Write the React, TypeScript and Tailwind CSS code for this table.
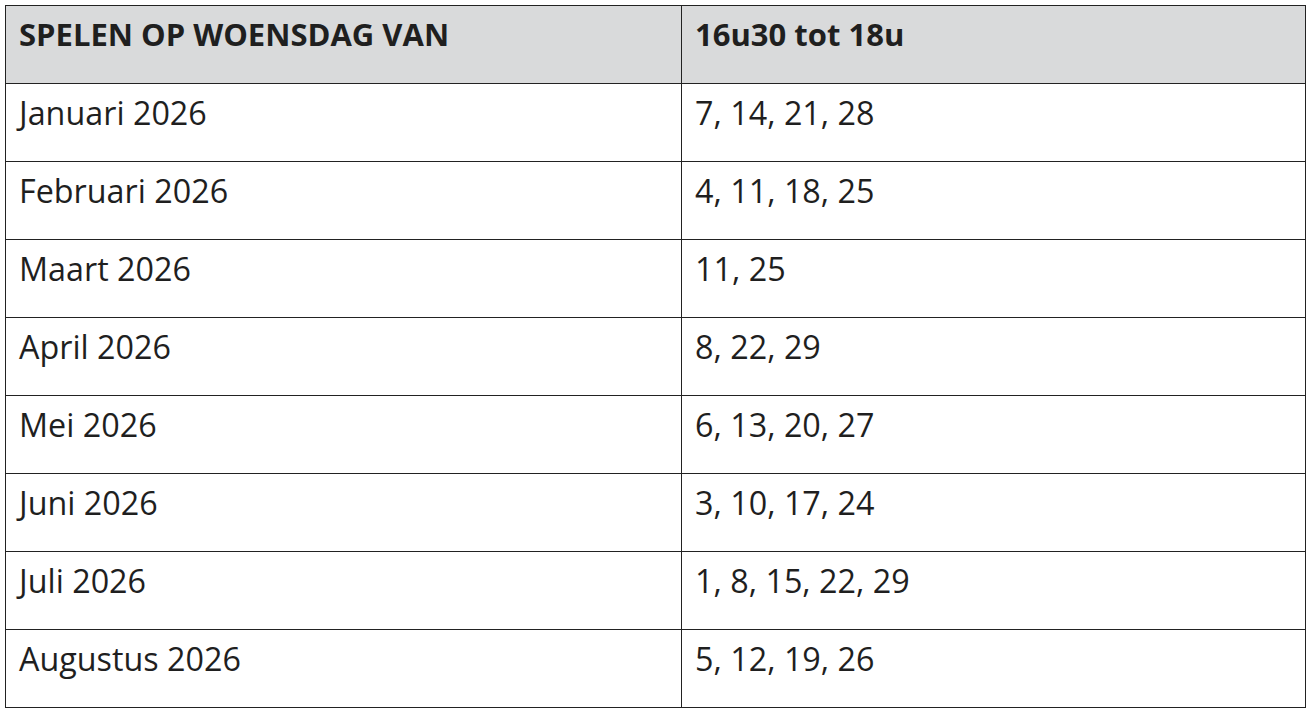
import React from "react";

const rows: [string, string][] = [
  ["Januari 2026", "7, 14, 21, 28"],
  ["Februari 2026", "4, 11, 18, 25"],
  ["Maart 2026", "11, 25"],
  ["April 2026", "8, 22, 29"],
  ["Mei 2026", "6, 13, 20, 27"],
  ["Juni 2026", "3, 10, 17, 24"],
  ["Juli 2026", "1, 8, 15, 22, 29"],
  ["Augustus 2026", "5, 12, 19, 26"],
];

export default function App() {
  return (
    <div className="w-[1310px] h-[716px] bg-white p-[5px]" style={{ fontFamily: '"Open Sans", "Noto Sans", sans-serif' }}>
      <table className="w-[1300px] border-collapse text-[#1f1f1f] table-fixed">
        <colgroup>
          <col className="w-[676px]" />
          <col className="w-[624px]" />
        </colgroup>
        <thead>
          <tr className="h-[78px] bg-[#d9dadb]">
            <th className="border-[1.5px] border-[#222] text-left align-top pl-[13px] pt-[8px] text-[31px] font-bold leading-[40px]">
              SPELEN OP WOENSDAG VAN
            </th>
            <th className="border-[1.5px] border-[#222] text-left align-top pl-[13px] pt-[8px] text-[31px] font-bold leading-[40px]">
              16u30 tot 18u
            </th>
          </tr>
        </thead>
        <tbody>
          {rows.map(([m, d]) => (
            <tr key={m} className="h-[78px]">
              <td className="border-[1.5px] border-[#222] align-top pl-[13px] pt-[8px] text-[32.3px] leading-[40px]">{m}</td>
              <td className="border-[1.5px] border-[#222] align-top pl-[13px] pt-[8px] text-[32.3px] leading-[40px]">{d}</td>
            </tr>
          ))}
        </tbody>
      </table>
    </div>
  );
}
